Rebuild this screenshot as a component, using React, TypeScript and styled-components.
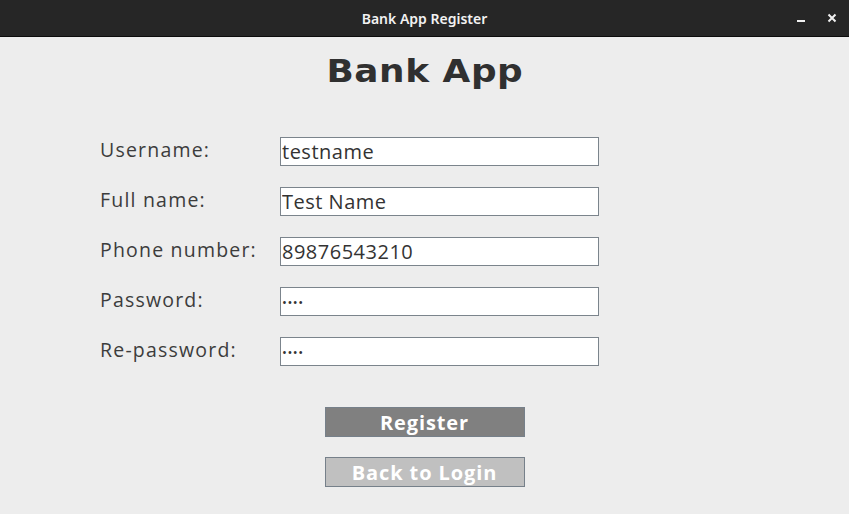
import React from "react";
import styled, { createGlobalStyle } from "styled-components";

const Global = createGlobalStyle`
  html, body { margin: 0; padding: 0; background: #ededed; }
  body { width: 849px; height: 514px; overflow: hidden; }
`;

const Window = styled.div`
  width: 849px;
  height: 514px;
  display: flex;
  flex-direction: column;
  background: #ededed;
`;

const TitleBar = styled.div`
  height: 36px;
  flex: none;
  background: #262626;
  border-bottom: 1px solid #0c0c0c;
  display: flex;
  align-items: center;
  justify-content: center;
  position: relative;
  color: #f2f2f2;
  font-family: "Noto Sans", "Open Sans", sans-serif;
  font-weight: 600;
  font-size: 14px;
`;

const WinControls = styled.div`
  position: absolute;
  right: 12px;
  top: 0;
  height: 36px;
  display: flex;
  align-items: center;
  gap: 21px;
`;

const Body = styled.div`
  flex: 1;
  display: flex;
  flex-direction: column;
  align-items: center;
`;

const Heading = styled.h1`
  margin: 13px 0 0 0;
  font-family: "DejaVu Sans", sans-serif;
  font-weight: 900;
  font-size: 32px;
  letter-spacing: 0.5px;
  color: #303030;
  transform: scaleX(1.12);
  line-height: 42px;
`;

const Form = styled.div`
  margin-top: 45px;
  display: grid;
  grid-template-columns: 180px 319px;
  row-gap: 21px;
  align-self: flex-start;
  padding-left: 100px;
`;

const Label = styled.label`
  font-family: "Open Sans", sans-serif;
  font-size: 19.5px;
  letter-spacing: 1.2px;
  color: #3c3c3c;
  display: flex;
  align-items: center;
  height: 29px;
  margin-top: -2px;
`;

const Input = styled.input`
  box-sizing: border-box;
  width: 319px;
  height: 29px;
  border: 1px solid #7b848c;
  background: #ffffff;
  padding: 0 0 0 1px;
  font-family: "Open Sans", sans-serif;
  font-size: 20px;
  letter-spacing: 0.5px;
  color: #333;
  outline: none;
  &[type="password"] {
    font-size: 13px;
    letter-spacing: 0.5px;
  }
`;

const Buttons = styled.div`
  margin-top: 41px;
  display: flex;
  flex-direction: column;
  gap: 20px;
  align-items: center;
`;

const Button = styled.button<{ $primary?: boolean }>`
  box-sizing: border-box;
  width: 200px;
  height: 30px;
  border: 1px solid #76808a;
  background: ${(p) => (p.$primary ? "#808080" : "#c0c0c0")};
  color: #ffffff;
  font-family: "Open Sans", sans-serif;
  font-weight: 700;
  font-size: 20px;
  letter-spacing: 0.9px;
  padding: 0;
  display: flex;
  align-items: center;
  justify-content: center;
`;

export default function App() {
  const fields: [string, string, string][] = [
    ["Username:", "testname", "text"],
    ["Full name:", "Test Name", "text"],
    ["Phone number:", "89876543210", "text"],
    ["Password:", "abcd", "password"],
    ["Re-password:", "abcd", "password"],
  ];
  return (
    <Window>
      <Global />
      <TitleBar>
        Bank App Register
        <WinControls>
          <svg width="10" height="10" viewBox="0 0 10 10">
            <rect x="1" y="7" width="8" height="2" fill="#f0f0f0" />
          </svg>
          <svg width="10" height="10" viewBox="0 0 10 10">
            <path d="M1.5 1.5 L8.5 8.5 M8.5 1.5 L1.5 8.5" stroke="#f0f0f0" strokeWidth="2" />
          </svg>
        </WinControls>
      </TitleBar>
      <Body>
        <Heading>Bank App</Heading>
        <Form>
          {fields.map(([l, v, t]) => (
            <React.Fragment key={l}>
              <Label>{l}</Label>
              <Input type={t} defaultValue={v} />
            </React.Fragment>
          ))}
        </Form>
        <Buttons>
          <Button $primary>Register</Button>
          <Button>Back to Login</Button>
        </Buttons>
      </Body>
    </Window>
  );
}
